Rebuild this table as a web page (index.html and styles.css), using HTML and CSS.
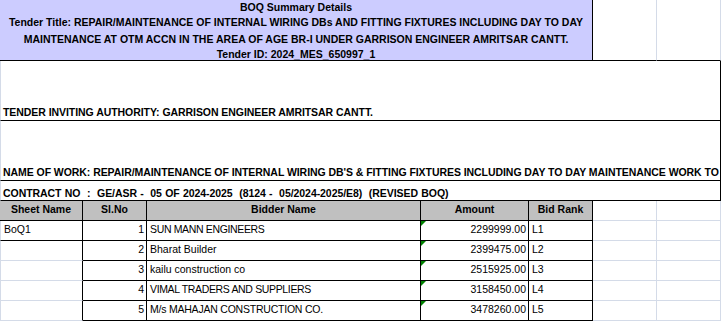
FILE: index.html
```html
<!DOCTYPE html>
<html>
<head>
<meta charset="utf-8">
<link rel="stylesheet" href="styles.css">
</head>
<body>
<div class="sheet">
  <div class="summary">
    <div class="sum-head">BOQ Summary Details</div>
    <div class="sum-title">Tender Title: REPAIR/MAINTENANCE OF INTERNAL WIRING DBs AND FITTING FIXTURES INCLUDING DAY TO DAY<br>MAINTENANCE AT OTM ACCN IN THE AREA OF AGE BR-I UNDER GARRISON ENGINEER AMRITSAR CANTT.</div>
    <div class="sum-id">Tender ID: 2024_MES_650997_1</div>
  </div>
  <div class="grid-cell top"></div>
  <div class="grid-cell top"></div>

  <div class="band tall">TENDER INVITING AUTHORITY: GARRISON ENGINEER AMRITSAR CANTT.</div>
  <div class="band tall">NAME OF WORK: REPAIR/MAINTENANCE OF INTERNAL WIRING DB'S &amp; FITTING FIXTURES INCLUDING DAY TO DAY MAINTENANCE WORK TO</div>
  <div class="band short">CONTRACT NO  :  GE/ASR -  05 OF 2024-2025  (8124 -  05/2024-2025/E8)  (REVISED BOQ)</div>

  <div class="th first">Sheet Name</div>
  <div class="th">Sl.No</div>
  <div class="th">Bidder Name</div>
  <div class="th">Amount</div>
  <div class="th">Bid Rank</div>
  <div class="grid-cell"></div>
  <div class="grid-cell"></div>

  <div class="td first boxed">BoQ1</div>
  <div class="td num">1</div>
  <div class="td"><span class="caps">SUN MANN ENGINEERS</span></div>
  <div class="td num flag">2299999.00</div>
  <div class="td">L1</div>
  <div class="grid-cell"></div>
  <div class="grid-cell"></div>

  <div class="td first empty"></div>
  <div class="td num">2</div>
  <div class="td">Bharat Builder</div>
  <div class="td num flag">2399475.00</div>
  <div class="td">L2</div>
  <div class="grid-cell"></div>
  <div class="grid-cell"></div>

  <div class="td first empty"></div>
  <div class="td num">3</div>
  <div class="td">kailu construction co</div>
  <div class="td num flag">2515925.00</div>
  <div class="td">L3</div>
  <div class="grid-cell"></div>
  <div class="grid-cell"></div>

  <div class="td first empty"></div>
  <div class="td num">4</div>
  <div class="td"><span class="caps">VIMAL TRADERS AND SUPPLIERS</span></div>
  <div class="td num flag">3158450.00</div>
  <div class="td">L4</div>
  <div class="grid-cell"></div>
  <div class="grid-cell"></div>

  <div class="td first empty"></div>
  <div class="td num">5</div>
  <div class="td"><span class="caps caps-mixed">M/s MAHAJAN CONSTRUCTION CO.</span></div>
  <div class="td num flag">3478260.00</div>
  <div class="td">L5</div>
  <div class="grid-cell"></div>
  <div class="grid-cell"></div>
</div>
</body>
</html>
```

FILE: styles.css
```css
* { box-sizing: border-box; }

html, body {
  margin: 0;
  padding: 0;
  background: #ffffff;
}

body {
  font-family: "Liberation Sans", Arial, sans-serif;
  font-size: 10.5px;
  color: #000000;
}

.sheet {
  display: grid;
  width: 721px;
  grid-template-columns: 83px 64px 274px 108px 64px 64px 64px;
  grid-template-rows: 61px 60px 60px 20px 20px 20px 20px 20px 20px 20px;
}

.summary {
  grid-column: 1 / 6;
  background: #ccccff;
  border-right: 1px solid #000;
  border-bottom: 1px solid #000;
  font-weight: bold;
  text-align: center;
  display: flex;
  flex-direction: column;
}

.summary > div {
  flex: 0 0 auto;
}

.sum-head {
  height: 14px;
  line-height: 14px;
}

.sum-title {
  height: 34px;
  line-height: 17px;
}

.sum-id {
  height: 12px;
  line-height: 13px;
}

.grid-cell {
  border-right: 1px solid #d4dbe8;
  border-bottom: 1px solid #d4dbe8;
}

.grid-cell.top {
  border-bottom: 1px solid #000;
}

.band {
  grid-column: 1 / 8;
  border-right: 1px solid #000;
  border-bottom: 1px solid #000;
  border-left: 1px solid #d4dbe8;
  font-weight: bold;
  white-space: pre;
  overflow: hidden;
  display: flex;
  align-items: flex-end;
  padding-left: 2px;
  letter-spacing: -0.06px;
}

.band.tall {
  padding-bottom: 2px;
}

.band.short {
  padding-bottom: 1px;
  word-spacing: 0.45px;
}

.th {
  background: #c0c0c0;
  border-right: 1px solid #000;
  border-bottom: 1px solid #000;
  font-weight: bold;
  text-align: center;
  line-height: 17px;
}

.td {
  border-right: 1px solid #000;
  border-bottom: 1px solid #000;
  line-height: 17px;
  padding: 0 2px 0 3px;
  white-space: nowrap;
  overflow: hidden;
}

.caps {
  letter-spacing: -0.35px;
}

.caps-mixed {
  letter-spacing: -0.22px;
}

.td.first {
  padding-left: 3px;
  border-left: 1px solid #d4dbe8;
}

.td.empty {
  border-bottom: 1px solid #d4dbe8;
}

.td.num {
  text-align: right;
  padding-right: 2px;
}

.flag {
  position: relative;
}

.flag::before {
  content: "";
  position: absolute;
  left: 0;
  top: 0;
  width: 0;
  height: 0;
  border-top: 5px solid #008000;
  border-right: 5px solid transparent;
}
```
